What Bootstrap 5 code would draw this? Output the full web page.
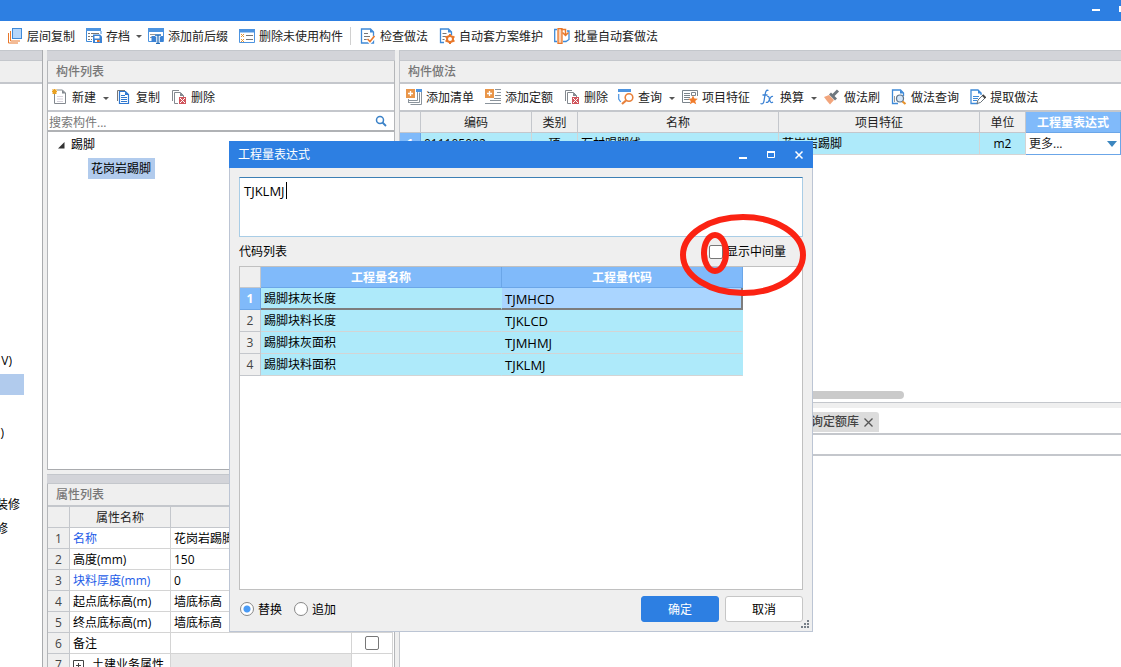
<!DOCTYPE html>
<html lang="zh-CN">
<head>
<meta charset="utf-8">
<meta name="viewport" content="width=device-width, initial-scale=1">
<title>构件做法</title>
<link href="https://cdn.jsdelivr.net/npm/bootstrap@5.3.0/dist/css/bootstrap.min.css" rel="stylesheet">
<style>
:root{--blue:#2d7fe2;--face:#efefef;--line:#c4c7cc;--band:#d3d4d9;--head:#80bafa;--row:#aeeafa;--pick:#b1cbed}
body{font-family:"Open Sans","Noto Sans CJK SC",sans-serif;font-size:12px;line-height:18px;color:#000;background:var(--face);height:100vh;overflow:hidden}
.topbar{height:21px;background:var(--blue);padding-left:1092px}
.topbar svg{width:29px;height:21px}
.tools{background:#fff;color:#222;flex:none}
.main-tools{height:29px;padding-left:1px}
.tool{border:0;background:none;padding:2px 5px 0 6px;display:flex;align-items:center;gap:4px;color:inherit;white-space:nowrap;height:24px}
.tool svg{width:16px;height:16px;flex:none;margin-bottom:2px}
.tool.drop{padding-right:1px}
.tool.drop::after{content:"";border:3px solid transparent;border-top-color:#555;border-bottom:0;margin-left:3px}
.main-tools .tool.drop{padding-right:0}
.main-tools .tool.drop::after{margin-left:2px}
.rule-v{width:1px;height:18px;background:#d0d0d0;margin:0 3px 0 2px}
.band{height:11px;background:var(--band);border:solid var(--line);border-width:1px 0;flex:none}
.caption{height:23px;background:var(--face);border-bottom:2px solid var(--line);color:#777;padding:2px 0 0 9px;font-size:12px;line-height:18px;margin:0;font-weight:500;flex:none}
.pane-tools{height:28px;border-bottom:2px solid var(--line)}
.side{width:43px;border-right:1px solid #a9abae;flex:none;overflow:hidden}
.side ul{padding-top:264px}
.side li{height:24px;display:flex;align-items:center;justify-content:flex-end;overflow:hidden;white-space:nowrap;padding-top:2px}
.w-a{width:12px}.w-b{width:24px}.w-c{width:4px}.w-d{width:20px}.w-e{width:8px}
.side li.picked{height:21px;margin:2px 0 1px;background:var(--pick)}
.mid{width:348px;flex:none;margin:0 4px}
.framed{border:solid #b4b6b9;border-width:0 1px}
.search{height:20px;border-bottom:2px solid #b0b2b5;background:#fff}
.search input{border:0;outline:0;background:none;padding:2px 0 0 1px;height:18px;font-size:12px;line-height:16px;color:#222}
.search input::placeholder{color:#777;opacity:1}
.search svg{width:12px;height:12px;margin-right:7px}
.tree{border-bottom:1px solid #a9abae;background:#fff;min-height:0}
.tree .node{height:24px;padding:2px 0 0 10px}
.tree .node svg{width:7px;height:7px;margin-right:6px}
.tree .leaf{background:var(--pick);height:21px;padding:2px 3px 0;margin:2px 0 0 40px;width:67px}
.props{height:193px;overflow:hidden;margin-top:4px;flex:none}
.props .band{height:10px}
.sheet{border-collapse:separate;border-spacing:0;table-layout:fixed;width:100%;margin:0;color:#000}
.sheet th,.sheet td{border:solid #d4d4d4;border-width:0 1px 1px 0;padding:0 0 0 3px;height:21px;font-weight:400;overflow:hidden;white-space:nowrap;vertical-align:middle;line-height:18px}
.sheet thead th{background:var(--face);border-color:var(--line);text-align:center;color:#222;padding:2px 0 0}
.sheet tbody th{background:var(--face);border-color:var(--line);text-align:center;color:#444;padding:0}
.props .sheet{width:346px;background:#fff}
.props .sheet tbody td,.props .sheet tbody th{padding-top:2px}
.c20{width:21px}.c22{width:22px}.c41{width:41px}.c46{width:46px}.c101{width:101px}.c111{width:111px}.c181{width:181px}.c201{width:201px}.c241{width:241px}
.sheet .key{color:#1d5ce8}
.sheet .shade{background:#e9e9e9}
.tick{appearance:none;width:14px;height:14px;border:1px solid #777;border-radius:2px;background:#fff;margin:0;flex:none}
.tick:checked{background:var(--blue)}
.expand{width:11px;height:11px;margin-right:5px}
.right-col{min-width:0;border-left:1px solid var(--line);background:#fff}
.work .sheet td{background:var(--row)}
.work .sheet td,.work .sheet tbody th{height:22px}
.sheet thead th.hot{background:var(--head);color:#fff;font-weight:700;border-color:#6ba6e8}
.sheet tbody th.hot{background:var(--head);color:#fff;font-weight:700;border-color:#6ba6e8}
.work .sheet td.editing{background:#fff;border-color:#6ba6e8;padding:0 3px 0 3px}
.editing select{appearance:none;border:0;outline:0;width:100%;font-size:12px;padding:0;color:#222;line-height:18px;background:none;display:block}
.editing label{display:block;position:relative}
.editing svg{position:absolute;right:0;top:6px;width:10px;height:6px;pointer-events:none}
.thumb{height:8px;width:504px;max-width:70%;background:#cacaca;border-radius:4px;margin-bottom:3px}
.lower{height:265px;flex:none;border-top:1px solid var(--line)}
.lower .gutter{height:5px;background:var(--face)}
.tabs-row{height:27px;border-bottom:2px solid var(--line);padding:4px 0 1px}
.doc-tab{border:0;width:479px;background:#dcdcdc;color:#444;border-radius:3px 3px 0 0;height:20px;padding:0 6px 0 0;display:flex;align-items:center;justify-content:flex-end;gap:5px;font-weight:500}
.doc-tab svg{width:9px;height:9px}
.lower .strip{height:21px;border-bottom:2px solid var(--line)}
/* floating dialog */
.dlg{position:absolute;left:229px;top:141px;width:584px;height:491px;background:var(--face);border:1px solid #bcc5d4;border-top:0}
.dlg-head{height:27px;background:var(--blue);color:#fff;margin:0 -1px;padding:0 0 0 9px;flex:none}
.dlg-head h2{font-size:12px;font-weight:400;margin:0;line-height:18px}
.dlg-head button{border:0;background:none;width:28px;height:20px;padding:0;display:flex;align-items:center;justify-content:center}
.dlg-head svg{width:10px;height:10px}
.dlg-body{padding:9px;min-height:0}
.expr{height:60px;border:1px solid #a9cde6;border-top-color:#3c7fb4;resize:none;outline:0;padding:3px 4px;font-size:13px;line-height:20px;width:100%;display:block;border-radius:0;background:#fff;color:#000}
.expr-wrap{position:relative}
.caret{position:absolute;left:47px;top:5px;width:1px;height:17px;background:#000}
.list-head{height:29px}
.list-head label{margin-right:17px;gap:3px}
.codes{border:1px solid #c0c0c0;background:#fff}
.codes .sheet{width:503px}
.codes .sheet td{background:var(--row);border-right-color:var(--row);height:22px}
.codes .sheet td:last-child{font-size:13px}
.codes .sheet tbody th{height:22px}
.codes .sheet tr.cur td{border-bottom:2px solid #7d7d7d;padding-top:2px}
.codes .sheet tr.cur td:last-child{background:#aad5ff;border-right:2px solid #7d7d7d}
.dlg-foot{height:32px;padding:6px 0 0 1px}
.pickone{gap:4px;margin-right:12px;height:26px;padding-top:1px}
.pickone input{appearance:none;width:14px;height:14px;border:1px solid #888;border-radius:50%;background:#fff;margin:0 0 2px}
.pickone input:checked{background:radial-gradient(circle,#4a9bf5 3px,#fff 4px)}
.act{width:78px;height:26px;border-radius:3px;font-size:12px;line-height:18px;padding:1px 0 0}
.act-ok{background:var(--blue);border:1px solid var(--blue);color:#fff}
.act-no{background:#fff;border:1px solid #c6c6c6;color:#000;margin-left:6px}
.grip{position:absolute;right:3px;bottom:3px;width:8px;height:8px}
.marks{position:absolute;left:679px;top:213px;width:128px;height:84px;pointer-events:none}
</style>
</head>
<body class="d-flex flex-column">
<svg class="d-none" xmlns="http://www.w3.org/2000/svg">
 <symbol id="layers" viewBox="0 0 16 16"><path d="M1.500 5v10H11" fill="none" stroke="#e8772a"/><path d="M3.500 3v10H13" fill="none" stroke="#e8772a"/><rect x="5.500" y=".5" width="9" height="10" fill="#b5d6fb" stroke="#3f8ad8"/></symbol>
 <symbol id="save" viewBox="0 0 16 16"><path d="M.5 3v10.500H6" fill="none" stroke="#3f8ad8"/><path d="M0 0h15v3H0z" fill="#4d94e0"/><path d="M15 3v3" stroke="#3f8ad8"/><path d="M2 5.500h2m1 0h8M2 8.500h2m1 0h2M2 11.500h2m1 0h1" stroke="#777"/><path d="M7 6.500h7l2 2V15H7z" fill="#3b82d4"/><path d="M8.500 8h5v2.500h-5z" fill="#fff"/><path d="M9 12h4.500v2H9z" fill="#fff"/><path d="M11 12h2.500v2H11z" fill="#e8772a"/></symbol>
 <symbol id="affix" viewBox="0 0 16 16"><path d="M.5 1h15v12.500H.5z" fill="#fff" stroke="#4d94e0"/><path d="M0 0h16v4H0z" fill="#4d94e0"/><path d="M2 6.500h5M2 9.500h2" stroke="#999"/><path d="M3.500 8h5v6h-5zM11.500 8h3.500v6h-3.500z" fill="#3b82d4"/><path d="M7 7h6M10 7v8M8 15.300h4" stroke="#fff" stroke-width="3"/><path d="M7 7h6M10 7v8M8 15.300h4" stroke="#256db8" stroke-width="1.300"/></symbol>
 <symbol id="unused" viewBox="0 0 16 16"><path d="M.5 1.500h15v13H.5z" fill="#fff" stroke="#4d94e0"/><path d="M0 1h16v3.500H0z" fill="#4d94e0"/><path d="M2 6l3 3m0-3L2 9m0 2l3 3m0-3l-3 3" stroke="#e8922a"/><path d="M7 7.500h7M7 11.500h7" stroke="#777"/></symbol>
 <symbol id="check" viewBox="0 0 16 16"><path d="M1.500 1h9l3 3v11h-12z" fill="#fff" stroke="#3f8ad8" stroke-width="1.300"/><path d="M10 1v3.500h4z" fill="#3f8ad8"/><path d="M4 5.500h4M4 8.500h6M4 11.500h3" stroke="#777"/><path d="M7.500 11l2.500 3 4.500-5" fill="none" stroke="#fff" stroke-width="3.500"/><path d="M7.500 11l2.500 2.500L14.500 8" fill="none" stroke="#e8772a" stroke-width="1.600"/></symbol>
 <symbol id="gear" viewBox="0 0 16 16"><path d="M5 14.500H1.500V1h8l3 3v3" fill="#fff" stroke="#3f8ad8" stroke-width="1.300"/><path d="M9 1v3.500h4z" fill="#3f8ad8"/><path d="M3.500 5.500h4M3.500 8.500h4M3.500 11.500h2" stroke="#777"/><circle cx="11" cy="11" r="3" fill="#fff" stroke="#e8772a" stroke-width="2"/><path d="M11 6v2M11 14v2M6.500 8.500l1.800 1M13.700 12.500l1.800 1M6.500 13.500l1.800-1M13.700 9.500l1.800-1" stroke="#e8772a" stroke-width="2"/></symbol>
 <symbol id="batch" viewBox="0 0 16 16"><path d="M3 1.500H.7v12H3M9 13.500h3l3-2V3h-2" fill="none" stroke="#3f8ad8" stroke-width="1.300"/><path d="M4 .7h4v14.600H4z" fill="#fbd3b8" stroke="#e8772a" stroke-width="1.300"/><path d="M7 1.500h4.500V7M8.500 4.500l3 3 3-3" fill="none" stroke="#e8772a" stroke-width="1.500"/></symbol>
 <symbol id="new" viewBox="0 0 16 16"><path d="M2.500 3v11.500h11V4l-3-3H5" fill="#fff" stroke="#83898f"/><path d="M10 1v3.500h4z" fill="#83898f"/><path d="M5 7.500h6M5 10h6M5 12.500h6" stroke="#d5d0da"/><path d="M.5.500l4 4m0-4l-4 4M2.500 0v5M0 2.500h5" stroke="#e8a020" stroke-width="1.200"/></symbol>
 <symbol id="copy" viewBox="0 0 16 16"><path d="M1.500 12V1.500H9" fill="none" stroke="#777"/><path d="M3.500 2.500h6l3 3v9h-9z" fill="#fff" stroke="#2f77cf" stroke-width="1.200"/><path d="M9 2.500V6h4z" fill="#2f77cf"/><path d="M5 6.500h4M5 8.500h6M5 10.500h6M5 12.500h6" stroke="#2f77cf"/></symbol>
 <symbol id="del" viewBox="0 0 16 16"><path d="M1.500 12V1.500H8M7 14.500H3.500V3.500h6l3 3V8" fill="none" stroke="#83898f"/><path d="M9 3.500V7h4z" fill="#83898f"/><path d="M8 8h7v7H8z" fill="#d0555c"/><path d="M9 9l5 5m0-5l-5 5" stroke="#fff"/></symbol>
 <symbol id="addlist" viewBox="0 0 16 16"><path d="M10 0h6v3h-6z" fill="#4d94e0"/><path d="M15.500 3v12.500h-11M13.500 3.500v10h-11M3 11.500h8.500V3M2.500 10v4" fill="none" stroke="#8b949c"/><path d="M0 0h9v9H0z" fill="#e9964a"/><path d="M4.500 2v5M2 4.500h5" stroke="#fff" stroke-width="1.300"/></symbol>
 <symbol id="addquota" viewBox="0 0 16 16"><path d="M10 .5h6M12 3.500h4M10 6.500h6M9 9.500h7M5 11.500h11M0 14.500h16" stroke="#8b949c"/><path d="M0 0h9v9H0z" fill="#e9964a"/><path d="M4.500 2v5M2 4.500h5" stroke="#fff" stroke-width="1.300"/></symbol>
 <symbol id="query" viewBox="0 0 16 16"><path d="M0 0h13v3H0z" fill="#4d94e0"/><path d="M.7 5v5l2 3" fill="none" stroke="#4d94e0" stroke-width="1.200"/><circle cx="11" cy="8.500" r="3.800" fill="#fff" stroke="#e8803a" stroke-width="1.600"/><path d="M8 11.500L4 15" stroke="#e8803a" stroke-width="2.200"/></symbol>
 <symbol id="feature" viewBox="0 0 16 16"><path d="M15.500 7V1.500H.5v12H8" fill="none" stroke="#7b848b"/><path d="M2 4.500h6M2 6.500h6M2 8.500h6M2 10.500h5" stroke="#7b848b"/><path d="M9.500 3.500h4v3h-4z" fill="none" stroke="#7b848b"/><path d="M11 6.500l1.400 3 3.400.2-2.600 2.200 1 3.400-3.200-1.900-3.200 1.900 1-3.400-2.600-2.200 3.400-.2z" fill="#f07c2c"/></symbol>
 <symbol id="fx" viewBox="0 0 16 16"><path d="M8.500 1.500C6 .5 5.500 3 5 6l-1 6c-.4 2.500-1.500 3.500-3.500 2.500M2.500 6h5" fill="none" stroke="#3b82d4" stroke-width="1.300"/><path d="M7 7.500c2-1 2 1 2.500 3s1.500 4 3.500 2.500M13 7.500c-2-1-3 2-4 4s-2 2.500-3 1.500" fill="none" stroke="#3b82d4" stroke-width="1.200"/></symbol>
 <symbol id="brush" viewBox="0 0 16 16"><path d="M0 8l5-2 5 5-4 4.500C4 13 2 11 0 8z" fill="#f2a57c"/><path d="M5 5.500l2-2 6 6-2 2z" fill="#6f787f"/><path d="M9 6.500L14 1.500" stroke="#6f787f" stroke-width="3"/></symbol>
 <symbol id="docfind" viewBox="0 0 16 16"><path d="M7 14.500H1.500V1h8l3 3v3" fill="#fff" stroke="#3f8ad8" stroke-width="1.300"/><path d="M9 1v3.500h4z" fill="#3f8ad8"/><circle cx="9" cy="9.500" r="3.500" fill="#d4e7fb" stroke="#60758a" stroke-width="1.200"/><path d="M11.500 12.500l3 2.500" stroke="#e8922a" stroke-width="2.200"/><path d="M3.500 7v6" stroke="#999"/></symbol>
 <symbol id="extract" viewBox="0 0 16 16"><path d="M8 14.500H1V1h7l3 3v2" fill="#fff" stroke="#3f8ad8" stroke-width="1.300"/><path d="M8 1v3.500h4z" fill="#3f8ad8"/><path d="M3 7.500h6M3 9.500h5M3 11.500h4" stroke="#3f8ad8"/><path d="M7 14.500l1-3.500 5-5 2.500 2.500-5 5z" fill="#fff" stroke="#68727a"/><path d="M12.500 6l3 3" stroke="#444" stroke-width="2"/></symbol>
</svg>

<header class="topbar flex-shrink-0 d-flex"><svg viewBox="0 0 29 21"><path d="M0 9h8v2H0zM27 6h2v6h-2z" fill="#fff"/></svg></header>

<nav class="tools main-tools d-flex align-items-center" aria-label="主工具栏">
 <button class="tool"><svg><use href="#layers"/></svg>层间复制</button>
 <button class="tool drop"><svg><use href="#save"/></svg>存档</button>
 <button class="tool"><svg><use href="#affix"/></svg>添加前后缀</button>
 <button class="tool"><svg><use href="#unused"/></svg>删除未使用构件</button>
 <span class="rule-v"></span>
 <button class="tool"><svg><use href="#check"/></svg>检查做法</button>
 <button class="tool"><svg><use href="#gear"/></svg>自动套方案维护</button>
 <button class="tool"><svg><use href="#batch"/></svg>批量自动套做法</button>
</nav>

<main class="d-flex flex-grow-1" style="min-height:0">
 <aside class="side bg-white">
  <div class="band"></div><div class="caption"></div>
  <ul class="list-unstyled m-0">
   <li class="w-a">V)</li><li class="w-b picked"></li><li class="w-c"></li><li class="w-c">)</li><li></li><li></li><li class="w-d">装修</li><li class="w-e">修</li>
  </ul>
 </aside>

 <section class="mid d-flex flex-column">
  <div class="band"></div>
  <div class="framed d-flex flex-column flex-grow-1" style="min-height:0">
   <h2 class="caption ps-2">构件列表</h2>
   <div class="tools pane-tools d-flex align-items-center">
    <button class="tool drop ps-1"><svg><use href="#new"/></svg>新建</button>
    <button class="tool"><svg><use href="#copy"/></svg>复制</button>
    <button class="tool"><svg><use href="#del"/></svg>删除</button>
   </div>
   <div class="search d-flex align-items-center flex-shrink-0">
    <input class="flex-grow-1" type="text" placeholder="搜索构件..." aria-label="搜索构件">
    <svg viewBox="0 0 12 12"><circle cx="5" cy="5" r="3.500" fill="none" stroke="#3b82c8" stroke-width="1.500"/><path d="M7.500 7.500L11 11" stroke="#3b82c8" stroke-width="1.800"/></svg>
   </div>
   <div class="tree flex-grow-1">
    <div class="node d-flex align-items-center"><svg viewBox="0 0 7 7"><path d="M6.500 0v6.500H0z" fill="#333"/></svg>踢脚</div>
    <div class="leaf">花岗岩踢脚</div>
   </div>
  </div>
  <section class="props">
   <div class="band"></div>
   <div class="framed bg-white">
    <h2 class="caption ps-2">属性列表</h2>
    <table class="sheet">
     <colgroup><col class="c22"><col class="c101"><col class="c181"><col class="c41"><col></colgroup>
     <thead><tr><th></th><th>属性名称</th><th></th><th></th></tr></thead>
     <tbody>
      <tr><th>1</th><td class="key">名称</td><td>花岗岩踢脚</td><td></td></tr>
      <tr><th>2</th><td>高度(mm)</td><td>150</td><td></td></tr>
      <tr><th>3</th><td class="key">块料厚度(mm)</td><td>0</td><td></td></tr>
      <tr><th>4</th><td>起点底标高(m)</td><td>墙底标高</td><td></td></tr>
      <tr><th>5</th><td>终点底标高(m)</td><td>墙底标高</td><td></td></tr>
      <tr><th>6</th><td>备注</td><td></td><td class="p-0"><div class="d-flex justify-content-center"><input class="tick" type="checkbox" aria-label="备注附加"></div></td></tr>
      <tr><th>7</th><td><div class="d-flex align-items-center"><svg class="expand" viewBox="0 0 11 11"><path d="M.5.500h10v10H.5zM3 5.500h5M5.500 3v5" fill="none" stroke="#444"/></svg>&nbsp;土建业务属性</div></td><td class="shade"></td><td></td></tr>
     </tbody>
    </table>
   </div>
  </section>
 </section>

 <section class="right-col flex-grow-1 d-flex flex-column">
  <div class="band"></div>
  <div class="work flex-grow-1 d-flex flex-column" style="min-height:0">
   <h2 class="caption ps-2">构件做法</h2>
   <div class="tools pane-tools d-flex align-items-center">
    <button class="tool"><svg><use href="#addlist"/></svg>添加清单</button>
    <button class="tool"><svg><use href="#addquota"/></svg>添加定额</button>
    <button class="tool pe-1"><svg><use href="#del"/></svg>删除</button>
    <button class="tool drop"><svg><use href="#query"/></svg>查询</button>
    <button class="tool pe-1"><svg><use href="#feature"/></svg>项目特征</button>
    <button class="tool drop"><svg><use href="#fx"/></svg>换算</button>
    <button class="tool"><svg><use href="#brush"/></svg>做法刷</button>
    <button class="tool"><svg><use href="#docfind"/></svg>做法查询</button>
    <button class="tool"><svg><use href="#extract"/></svg>提取做法</button>
   </div>
   <table class="sheet">
    <colgroup><col class="c20"><col class="c111"><col class="c46"><col class="c201"><col class="c201"><col class="c46"><col></colgroup>
    <thead><tr><th></th><th>编码</th><th>类别</th><th>名称</th><th>项目特征</th><th>单位</th><th class="hot">工程量表达式</th></tr></thead>
    <tbody><tr><th class="hot">1</th><td>011105002</td><td class="text-center p-0">项</td><td>石材踢脚线</td><td>花岗岩踢脚</td><td class="text-center p-0">m2</td><td class="editing"><label><select aria-label="工程量表达式"><option>更多...</option></select><svg viewBox="0 0 10 6"><path d="M0 0h10L5 6z" fill="#3c86bf"/></svg></label></td></tr></tbody>
   </table>
   <div class="thumb mt-auto"></div>
  </div>
  <section class="lower">
   <div class="gutter"></div>
   <div class="tabs-row"><button class="doc-tab">查询定额库<svg viewBox="0 0 9 9"><path d="M.5.500l8 8m0-8l-8 8" stroke="#555" stroke-width="1.300"/></svg></button></div>
   <div class="strip"></div>
  </section>
 </section>
</main>

<section class="dlg d-flex flex-column" role="dialog" aria-label="工程量表达式">
 <header class="dlg-head d-flex align-items-center">
  <h2 class="flex-grow-1">工程量表达式</h2>
  <button aria-label="最小化"><svg viewBox="0 0 10 10"><path d="M1 7h8v2H1z" fill="#fff"/></svg></button>
  <button aria-label="最大化"><svg viewBox="0 0 10 10"><path d="M1.500 2.500h7v5h-7z" fill="none" stroke="#fff"/><path d="M1 2h8" stroke="#fff" stroke-width="2"/></svg></button>
  <button aria-label="关闭"><svg viewBox="0 0 10 10"><path d="M1.500 1.500l7 7m0-7l-7 7" stroke="#fff" stroke-width="1.500"/></svg></button>
 </header>
 <div class="dlg-body flex-grow-1 d-flex flex-column">
  <div class="expr-wrap"><textarea class="expr" aria-label="表达式">TJKLMJ</textarea><span class="caret"></span></div>
  <div class="list-head d-flex align-items-center justify-content-between">
   <span>代码列表</span>
   <label class="d-flex align-items-center"><input class="tick" type="checkbox">显示中间量</label>
  </div>
  <div class="codes flex-grow-1">
   <table class="sheet">
    <colgroup><col class="c20"><col class="c241"><col class="c241"></colgroup>
    <thead><tr><th></th><th class="hot">工程量名称</th><th class="hot">工程量代码</th></tr></thead>
    <tbody>
     <tr class="cur"><th class="hot">1</th><td>踢脚抹灰长度</td><td>TJMHCD</td></tr>
     <tr><th>2</th><td>踢脚块料长度</td><td>TJKLCD</td></tr>
     <tr><th>3</th><td>踢脚抹灰面积</td><td>TJMHMJ</td></tr>
     <tr><th>4</th><td>踢脚块料面积</td><td>TJKLMJ</td></tr>
    </tbody>
   </table>
  </div>
  <div class="dlg-foot d-flex">
   <label class="pickone d-flex align-items-center"><input type="radio" name="mode" checked>替换</label>
   <label class="pickone d-flex align-items-center"><input type="radio" name="mode">追加</label>
   <button class="btn act act-ok ms-auto">确定</button>
   <button class="btn act act-no">取消</button>
  </div>
 </div>
 <svg class="grip" viewBox="0 0 8 8"><path d="M6 0h2v2H6zM3 3h2v2H3zM6 3h2v2H6zM0 6h2v2H0zM3 6h2v2H3zM6 6h2v2H6z" fill="#777f88"/></svg>
</section>

<svg class="marks" viewBox="0 0 128 84"><g fill="none" stroke="#fb2313" stroke-width="6"><ellipse cx="64" cy="42" rx="60" ry="38"/><ellipse cx="36" cy="40" rx="11" ry="18"/></g></svg>
<script src="https://cdn.jsdelivr.net/npm/bootstrap@5.3.0/dist/js/bootstrap.bundle.min.js"></script>
</body>
</html>
